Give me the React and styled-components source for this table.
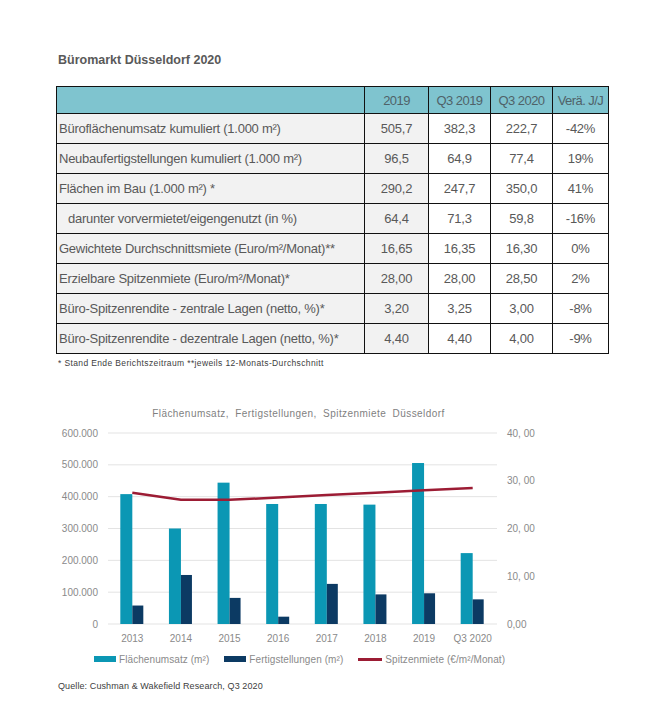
import React from 'react'
import styled, { createGlobalStyle } from 'styled-components'

const GlobalStyle = createGlobalStyle`
    body {
        margin: 0;
        background: #fff;
        font-family: "Liberation Sans", Arial, sans-serif;
    }
`

const rows = [
    { label: 'Büroflächenumsatz kumuliert (1.000 m²)', values: ['505,7', '382,3', '222,7', '-42%'] },
    { label: 'Neubaufertigstellungen kumuliert (1.000 m²)', values: ['96,5', '64,9', '77,4', '19%'] },
    { label: 'Flächen im Bau (1.000 m²) *', values: ['290,2', '247,7', '350,0', '41%'] },
    { label: 'darunter vorvermietet/eigengenutzt (in %)', values: ['64,4', '71,3', '59,8', '-16%'], indent: true },
    { label: 'Gewichtete Durchschnittsmiete (Euro/m²/Monat)**', values: ['16,65', '16,35', '16,30', '0%'] },
    { label: 'Erzielbare Spitzenmiete (Euro/m²/Monat)*', values: ['28,00', '28,00', '28,50', '2%'] },
    { label: 'Büro-Spitzenrendite - zentrale Lagen (netto, %)*', values: ['3,20', '3,25', '3,00', '-8%'] },
    { label: 'Büro-Spitzenrendite - dezentrale Lagen (netto, %)*', values: ['4,40', '4,40', '4,00', '-9%'] },
]

const headers = ['2019', 'Q3 2019', 'Q3 2020', 'Verä. J/J']
const colWidths = [308, 64, 62, 62, 56]

// chart data
const years = ['2013', '2014', '2015', '2016', '2017', '2018', '2019', 'Q3 2020']
const umsatz = [408000, 300000, 444000, 377000, 377000, 375000, 505700, 222700]
const fertig = [58000, 154000, 82000, 23000, 126000, 93000, 96500, 77400]
const miete = [27.5, 26, 26, 26.5, 27, 27.5, 28, 28.5]

// page coords -> svg coords (svg sits at x 56, y 425)
const OX = 56
const OY = 425
const plotLeft = 108 - OX
const plotRight = 497 - OX
const baseY = 624 - OY
const topY = 433 - OY
const catW = (plotRight - plotLeft) / years.length
const yLeft = v => baseY - (v / 600000) * (baseY - topY)
const yRight = v => baseY - (v / 40) * (baseY - topY)
const leftTicks = ['0', '100.000', '200.000', '300.000', '400.000', '500.000', '600.000']
const rightTicks = ['0,00', '10, 00', '20, 00', '30, 00', '40, 00']

function Chart() {
    const linePts = miete.map((v, i) => `${plotLeft + catW * (i + 0.5)},${yRight(v)}`).join(' ')
    return (
        <ChartSvg width="500" height="222" viewBox="0 0 500 222">
            {leftTicks.map((t, i) => {
                const y = baseY - i * (baseY - topY) / 6
                return (
                    <g key={t}>
                        <line x1={plotLeft} x2={plotRight} y1={y} y2={y} stroke="#e3e3e3" strokeWidth="1" />
                        <AxisText x={98 - OX} y={y + 3.5} textAnchor="end">{t}</AxisText>
                    </g>
                )
            })}
            {rightTicks.map((t, i) => (
                <AxisText key={t} x={507 - OX} y={baseY - i * (baseY - topY) / 4 + 3.5}>{t}</AxisText>
            ))}
            {years.map((yr, i) => {
                const c = plotLeft + catW * (i + 0.5)
                return (
                    <g key={yr}>
                        <rect x={c - 12} y={yLeft(umsatz[i])} width="12" height={baseY - yLeft(umsatz[i])} fill="#0b97b4" />
                        <rect x={c} y={yLeft(fertig[i])} width="11" height={baseY - yLeft(fertig[i])} fill="#0c3a63" />
                        <AxisText x={c} y={638 - OY + 3.5} textAnchor="middle">{yr}</AxisText>
                    </g>
                )
            })}
            <polyline points={linePts} fill="none" stroke="#9c1c34" strokeWidth="2.5" strokeLinejoin="round" />
        </ChartSvg>
    )
}

export default function App() {
    return (
        <Page>
            <GlobalStyle />
            <Title>Büromarkt Düsseldorf 2020</Title>
            <Table>
                <colgroup>
                    {colWidths.map((w, i) => <col key={i} style={{ width: w }} />)}
                </colgroup>
                <thead>
                    <tr>
                        <HeadCell />
                        {headers.map(h => <HeadCell key={h}>{h}</HeadCell>)}
                    </tr>
                </thead>
                <tbody>
                    {rows.map(r => (
                        <tr key={r.label}>
                            <LabelCell indent={r.indent ? 1 : 0}>{r.label}</LabelCell>
                            {r.values.map((v, i) => <ValueCell key={i} shaded={i === 0 ? 1 : 0}>{v}</ValueCell>)}
                        </tr>
                    ))}
                </tbody>
            </Table>
            <Footnote>* Stand Ende Berichtszeitraum **jeweils 12-Monats-Durchschnitt</Footnote>

            <ChartTitle>Flächenumsatz, Fertigstellungen, Spitzenmiete Düsseldorf</ChartTitle>
            <Chart />
            <Legend>
                <LegendItem>
                    <Swatch color="#0b97b4" />
                    Flächenumsatz (m²)
                </LegendItem>
                <LegendItem>
                    <Swatch color="#0c3a63" />
                    Fertigstellungen (m²)
                </LegendItem>
                <LegendItem>
                    <LineSwatch />
                    Spitzenmiete (€/m²/Monat)
                </LegendItem>
            </Legend>
            <Source>Quelle: Cushman &amp; Wakefield Research, Q3 2020</Source>
        </Page>
    )
}

const Page = styled.div`
    padding: 52px 0 0 56px;
    width: 560px;
`
const Title = styled.div`
    font-size: 12.5px;
    font-weight: bold;
    line-height: 16px;
    color: #595959;
    margin: 0 0 18px 2px;
`
const Table = styled.table`
    border-collapse: collapse;
    table-layout: fixed;
    width: 552px;
    font-size: 13px;
    letter-spacing: -0.25px;
    color: #595959;
`
const HeadCell = styled.th`
    height: 26px;
    padding: 0;
    font-weight: normal;
    background: #7fc4cf;
    border: 1px solid #111;
    color: #4f6268;
    text-align: center;
    white-space: nowrap;
    letter-spacing: -0.55px;
`
const LabelCell = styled.td`
    height: 29px;
    padding: 0 0 0 ${p => (p.indent ? '11px' : '2px')};
    background: #f2f2f2;
    border: 1px solid #111;
    white-space: nowrap;
`
const ValueCell = styled.td`
    height: 29px;
    padding: 0;
    text-align: center;
    background: ${p => (p.shaded ? '#f2f2f2' : '#fff')};
    border: 1px solid #111;
`
const Footnote = styled.div`
    margin: 4px 0 0 2px;
    font-size: 8.5px;
    line-height: 10px;
    color: #404040;
    letter-spacing: 0.37px;
`
const ChartTitle = styled.div`
    width: 485px;
    margin-top: 40px;
    text-align: center;
    font-size: 10px;
    line-height: 11px;
    color: #7f7f7f;
    letter-spacing: 0.45px;
    word-spacing: 3px;
`
const ChartSvg = styled.svg`
    display: block;
    margin-top: 6px;
`
const AxisText = styled.text`
    font-family: "Liberation Sans", Arial, sans-serif;
    font-size: 10px;
    fill: #8a8a8a;
`
const Legend = styled.div`
    display: flex;
    align-items: center;
    gap: 15px;
    margin: 6px 0 0 38px;
    height: 12px;
    font-size: 10px;
    color: #8a8a8a;
    letter-spacing: 0.08px;
`
const LegendItem = styled.div`
    display: flex;
    align-items: center;
    gap: 3px;
    white-space: nowrap;
`
const Swatch = styled.span`
    display: inline-block;
    width: 22px;
    height: 6px;
    background: ${p => p.color};
`
const LineSwatch = styled.span`
    display: inline-block;
    width: 24px;
    height: 3px;
    background: #9c1c34;
`
const Source = styled.div`
    margin: 16px 0 0 2px;
    font-size: 9px;
    line-height: 10px;
    color: #404040;
    letter-spacing: 0.1px;
`
